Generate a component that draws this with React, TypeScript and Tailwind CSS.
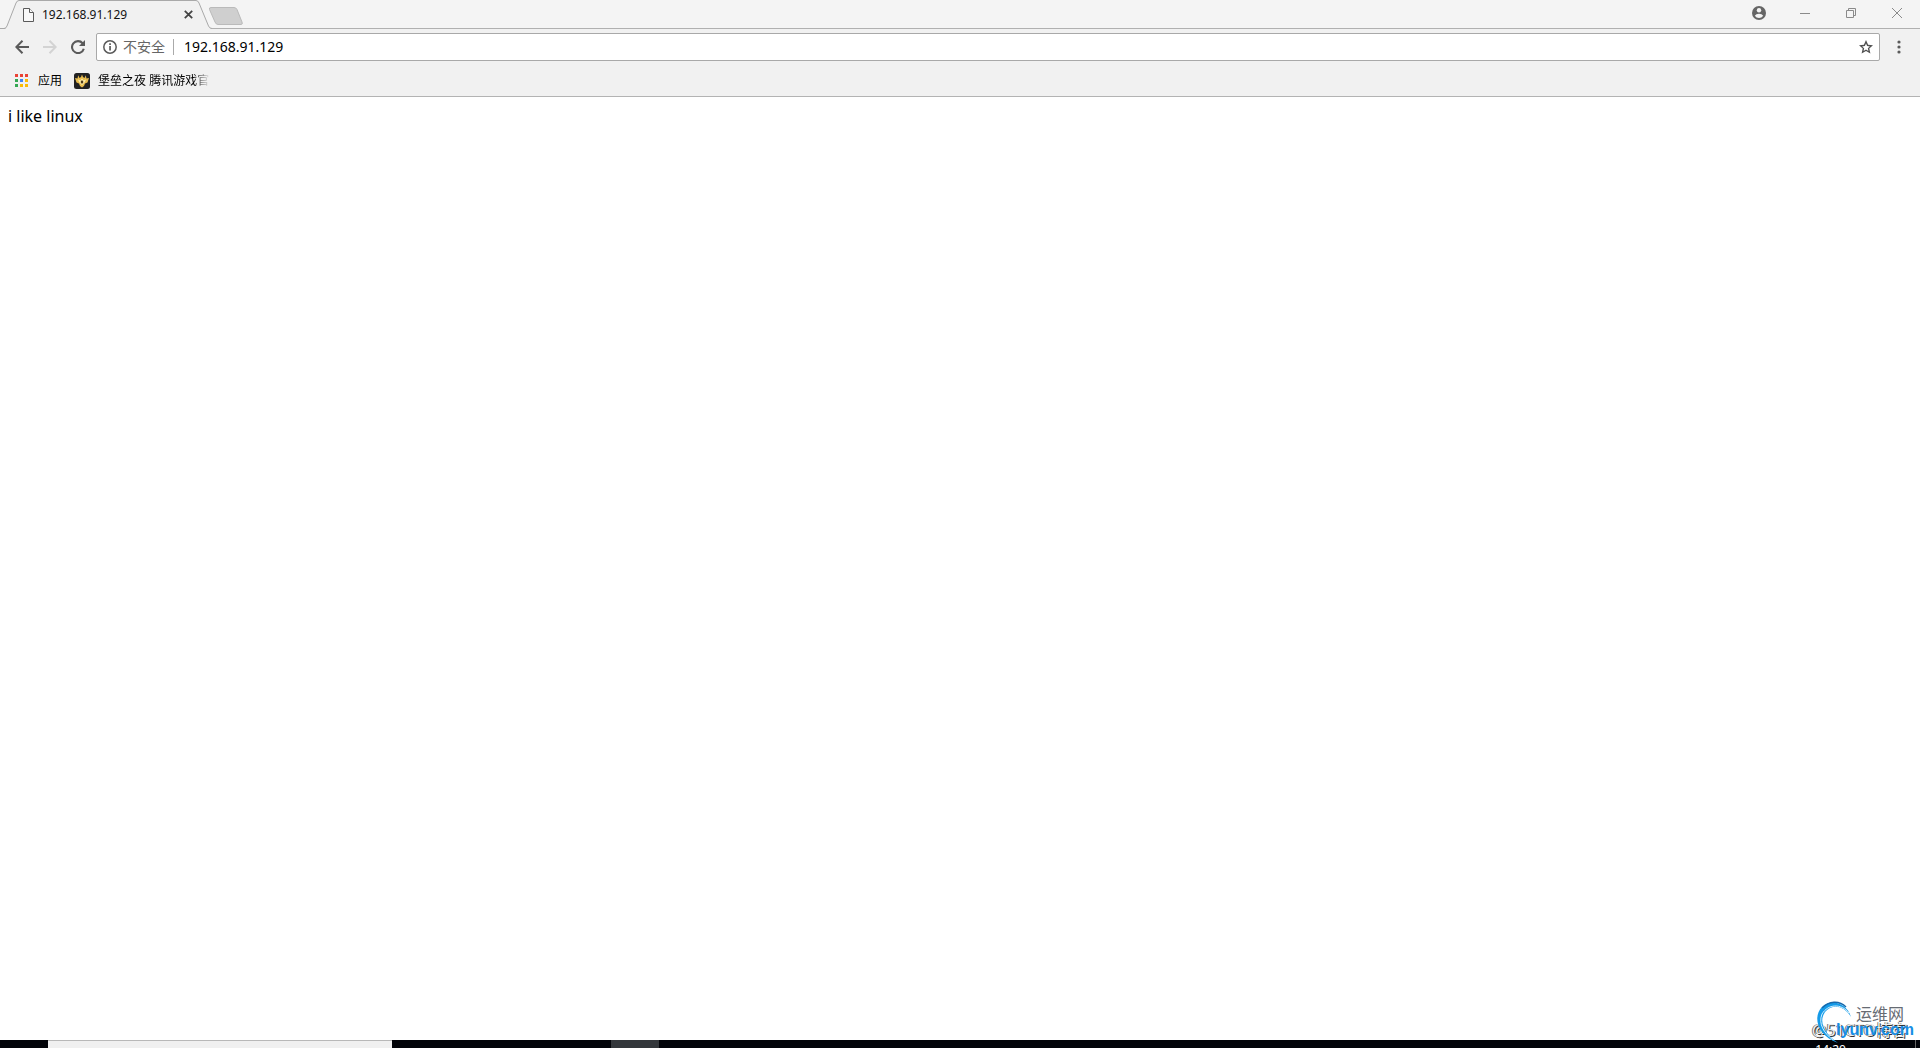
const appColors = [
  '#ea4335', '#ea4335', '#ea4335',
  '#34a853', '#4285f4', '#fbbc05',
  '#34a853', '#fbbc05', '#fbbc05',
];

function TabStrip() {
  return (
    <header className="flex h-[29px] shrink-0 items-start bg-[#f4f4f4] shadow-[inset_0_-1px_0_#b0b0b0]">
      <div className="relative h-[29px] w-[212px]">
        <svg className="absolute inset-0" width="212" height="29" viewBox="0 0 212 29">
          <path d="M5 29 Q6 28 7 26 L16 3 Q17 .5 19 .5 H196 Q198 .5 199 3 L208.500 26 Q209.500 28.500 212 29 Z" fill="#f1f1f1" />
          <path d="M0 28.500 H4 Q6 28.500 7 26 L16 3 Q17 .5 19 .5 H196 Q198 .5 199 3 L208.500 26 Q209.500 28.500 212 28.500" fill="none" stroke="#a9a9a9" />
        </svg>
        <div className="relative flex h-[29px] items-center pl-[23px] pr-4">
          <svg width="11" height="14" viewBox="0 0 11 14" fill="#f8f8f8" stroke="#5a5a5a">
            <path d="M.5.5h6l4 4v9H.5z" />
            <path d="M6.500.5v4h4" />
          </svg>
          <span className="ml-2 flex-1 text-xs text-[#111]">192.168.91.129</span>
          <button aria-label="Close tab" className="flex h-4 w-4 items-center justify-center">
            <svg width="9" height="9" viewBox="0 0 9 9" stroke="#444" strokeWidth="1.800">
              <path d="M.8.8l7.400 7.400M8.200.8L.8 8.200" />
            </svg>
          </button>
        </div>
      </div>
      <button aria-label="New tab" className="-ml-1 mt-[7px]">
        <svg width="36" height="18" viewBox="0 0 36 18">
          <path d="M3 .5H26Q28 .5 29 2.500L34 15Q35 17.500 33 17.500H10Q8 17.500 7 15L1.500 2.500Q.8.5 3 .5Z" fill="#cfcfcf" stroke="#bababa" />
        </svg>
      </button>
      <div className="ml-auto flex h-[26px] items-center">
        <button aria-label="Profile" className="flex w-[46px] justify-center">
          <svg width="14" height="14" viewBox="0 0 14 14">
            <circle cx="7" cy="7" r="7" fill="#666" />
            <circle cx="7" cy="4.300" r="2.200" fill="#f4f4f4" />
            <path d="M2.800 9.800Q4 7.700 7 7.700T11.200 9.800Q9.700 12 7 12T2.800 9.800Z" fill="#f4f4f4" />
          </svg>
        </button>
        <button aria-label="Minimize" className="flex w-[46px] justify-center">
          <svg width="10" height="10" viewBox="0 0 10 10" stroke="#8a8a8a">
            <path d="M0 5.500h10" />
          </svg>
        </button>
        <button aria-label="Restore" className="flex w-[46px] justify-center">
          <svg width="10" height="10" viewBox="0 0 10 10" fill="none" stroke="#8a8a8a">
            <path d="M.5 2.500h7v7h-7zM2.500 2.500v-2h7v7h-2" />
          </svg>
        </button>
        <button aria-label="Close" className="flex w-[46px] justify-center">
          <svg width="10" height="10" viewBox="0 0 10 10" stroke="#8a8a8a">
            <path d="M0 0l10 10M10 0L0 10" />
          </svg>
        </button>
      </div>
    </header>
  );
}

function Toolbar() {
  return (
    <div className="flex h-9 shrink-0 items-center bg-[#f1f1f1] pl-2">
      <button aria-label="Back" className="flex w-7 justify-center">
        <svg width="14" height="14" viewBox="0 0 14 14" fill="none" stroke="#5a5a5a" strokeWidth="2">
          <path d="M14 7H1.500M7.500.8L1.300 7l6.200 6.200" />
        </svg>
      </button>
      <button aria-label="Forward" className="flex w-7 justify-center">
        <svg width="14" height="14" viewBox="0 0 14 14" fill="none" stroke="#d3d3d3" strokeWidth="2">
          <path d="M0 7h12.500M6.500.8L12.700 7l-6.200 6.200" />
        </svg>
      </button>
      <button aria-label="Reload" className="flex w-7 justify-center">
        <svg width="14" height="14" viewBox="0 0 14 14">
          <path d="M11.600 3.200A6 6 0 1 0 12.800 8.800" fill="none" stroke="#5a5a5a" strokeWidth="2.100" />
          <path d="M14 0v6H8z" fill="#5a5a5a" />
        </svg>
      </button>
      <div className="ml-1 flex h-7 min-w-0 flex-1 items-center rounded-xs border border-[#a9a9a9] bg-white px-1.5">
        <svg width="14" height="14" viewBox="0 0 14 14">
          <circle cx="7" cy="7" r="6.200" fill="none" stroke="#5a5a5a" strokeWidth="1.500" />
          <path d="M6.200 6h1.700v4.500H6.200zM6.200 3.300h1.700V5H6.200z" fill="#5a5a5a" />
        </svg>
        <label htmlFor="address" className="ml-1.5 text-sm text-[#666]">不安全</label>
        <span className="ml-2 mr-2.5 h-4 w-px bg-[#aaa]" />
        <input id="address" type="text" defaultValue="192.168.91.129" className="min-w-0 flex-1 bg-transparent text-sm text-black outline-none" />
        <button aria-label="Bookmark this page">
          <svg width="14" height="14" viewBox="0 0 14 14">
            <path d="M7 0l2.100 4.700 4.900.5-3.700 3.300 1.100 5L7 11l-4.400 2.500 1.100-5L0 5.200l4.900-.5zM7 3.500L5.900 6.100l-2.800.3 2.100 1.900-.6 2.700L7 9.600l2.400 1.400-.6-2.700 2.100-1.900-2.800-.3z" fill="#505050" fillRule="evenodd" />
          </svg>
        </button>
      </div>
      <button aria-label="Menu" className="flex w-10 justify-center pr-[3px]">
        <svg width="4" height="14" viewBox="0 0 4 14" fill="#5a5a5a">
          <circle cx="2" cy="2" r="1.600" />
          <circle cx="2" cy="7" r="1.600" />
          <circle cx="2" cy="12" r="1.600" />
        </svg>
      </button>
    </div>
  );
}

function BookmarkBar() {
  return (
    <nav className="flex h-8 shrink-0 items-center border-b border-[#b3b3b3] bg-[#f1f1f1] pl-[15px] text-xs text-black">
      <a href="#apps" className="flex items-center">
        <svg width="13" height="13" viewBox="0 0 13 13" shapeRendering="crispEdges">
          {appColors.map((color, i) => (
            <rect key={i} x={(i % 3) * 5} y={Math.floor(i / 3) * 5} width="3" height="3" fill={color} />
          ))}
        </svg>
        <span className="ml-2.5">应用</span>
      </a>
      <a href="#fortnite" className="ml-3 flex items-center">
        <svg width="16" height="16" viewBox="0 0 16 16">
          <rect width="16" height="16" rx="2.500" fill="#222" />
          <path d="M7 4l1-2.500L9 4l1.500 1 1.300-2.800.7 3.300L15 5l-1.500 4.500L11 10.500 10 13l-2 1.500L6 13l-1-2.500-2.500-1L1 5l2.500.5.7-3.300L5.500 5z" fill="#e9bd4e" />
          <path d="M4 6.500l2.500 1L8 5.500l1.500 2 2.500-1-1.500 3L8 12 5.500 9.500z" fill="#fff0ad" />
          <path d="M8 7l1.500 2L8 11 6.500 9z" fill="#4a3210" />
        </svg>
        <span className="ml-2 w-28 overflow-hidden whitespace-nowrap mask-r-from-85%">堡垒之夜 腾讯游戏官方</span>
      </a>
    </nav>
  );
}

function Watermark() {
  return (
    <div className="pointer-events-none absolute right-1 bottom-2 h-10 w-[104px]">
      <span className="absolute bottom-0 left-0 text-base leading-5 whitespace-nowrap text-[#eee] [text-shadow:1px_1px_0_#333,-1px_0_0_#777]">@51CTO博客</span>
      <svg className="absolute top-0 left-0" width="44" height="46" viewBox="0 0 44 46" fill="none">
        <path d="M39 17C35 3 19-2 10 7C1 16 4 35 26 43C13 34 6 22 13 12C20 4 32 5 39 17Z" fill="#159be8" />
        <path d="M34 7C27 0 17 1 10 8" stroke="#1769ac" strokeWidth="1.500" />
        <path d="M37 13C29 3 16 4 10 14C6 24 12 33 21 40" stroke="#d6f1ff" />
      </svg>
      <span className="absolute top-1 right-3 text-base leading-5 whitespace-nowrap text-[#666b73]">运维网</span>
      <span className="absolute right-0.5 bottom-0 text-base leading-5 font-bold whitespace-nowrap text-[#168ee5] font-['Liberation_Sans',sans-serif]">lyunv.com</span>
    </div>
  );
}

function Taskbar() {
  return (
    <footer className="flex h-2 shrink-0 overflow-hidden bg-[#020409]">
      <div className="ml-12 w-[344px] border-t border-[#b8b8b8] bg-[#f0f0f0]" />
      <div className="ml-[219px] w-12 bg-[#33373b]" />
      <time className="ml-auto pt-1 text-xs leading-3 text-white">14:20</time>
      <div className="mr-1 ml-[69px] w-px bg-[#666]" />
    </footer>
  );
}

export default function App() {
  return (
    <div className="flex h-screen flex-col overflow-hidden bg-white font-['Noto_Sans','Noto_Sans_CJK_SC',sans-serif]">
      <TabStrip />
      <Toolbar />
      <BookmarkBar />
      <main className="min-h-0 flex-1 p-2 text-base leading-[22px] text-black">
        <p>i like linux</p>
      </main>
      <div className="relative shrink-0">
        <Taskbar />
        <Watermark />
      </div>
    </div>
  );
}
